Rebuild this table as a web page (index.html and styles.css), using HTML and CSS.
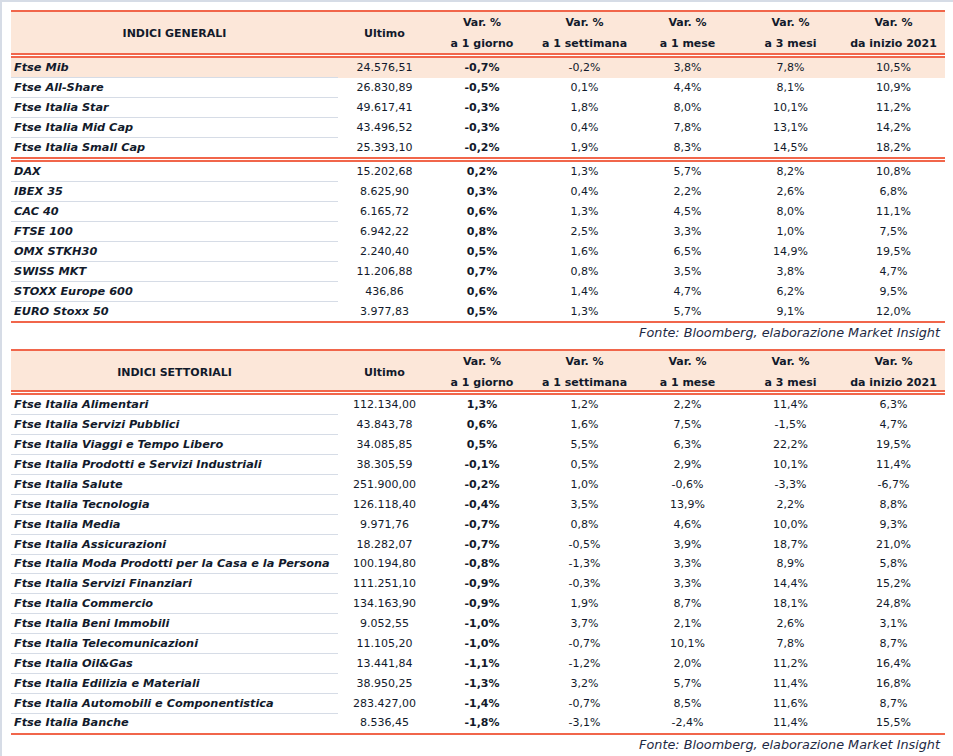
FILE: index.html
```html
<!DOCTYPE html>
<html lang="it">
<head>
<meta charset="utf-8">
<title>Indici</title>
<link rel="stylesheet" href="styles.css">
</head>
<body>
<div class="sheet">
  <div class="tbl">
    <div class="hdr hdr-a">
      <div class="hc">INDICI GENERALI</div>
      <div class="hc">Ultimo</div>
      <div class="hc">Var. %<br>a 1 giorno</div>
      <div class="hc">Var. %<br>a 1 settimana</div>
      <div class="hc">Var. %<br>a 1 mese</div>
      <div class="hc">Var. %<br>a 3 mesi</div>
      <div class="hc">Var. %<br>da inizio 2021</div>
    </div>
    <div class="dbl"></div>
    <div class="row hl"><div class="lb">Ftse Mib</div><div>24.576,51</div><div class="b">-0,7%</div><div>-0,2%</div><div>3,8%</div><div>7,8%</div><div>10,5%</div></div>
    <div class="row"><div class="lb">Ftse All-Share</div><div>26.830,89</div><div class="b">-0,5%</div><div>0,1%</div><div>4,4%</div><div>8,1%</div><div>10,9%</div></div>
    <div class="row"><div class="lb">Ftse Italia Star</div><div>49.617,41</div><div class="b">-0,3%</div><div>1,8%</div><div>8,0%</div><div>10,1%</div><div>11,2%</div></div>
    <div class="row"><div class="lb">Ftse Italia Mid Cap</div><div>43.496,52</div><div class="b">-0,3%</div><div>0,4%</div><div>7,8%</div><div>13,1%</div><div>14,2%</div></div>
    <div class="row last"><div class="lb">Ftse Italia Small Cap</div><div>25.393,10</div><div class="b">-0,2%</div><div>1,9%</div><div>8,3%</div><div>14,5%</div><div>18,2%</div></div>
    <div class="dbl"></div>
    <div class="row"><div class="lb">DAX</div><div>15.202,68</div><div class="b">0,2%</div><div>1,3%</div><div>5,7%</div><div>8,2%</div><div>10,8%</div></div>
    <div class="row"><div class="lb">IBEX 35</div><div>8.625,90</div><div class="b">0,3%</div><div>0,4%</div><div>2,2%</div><div>2,6%</div><div>6,8%</div></div>
    <div class="row"><div class="lb">CAC 40</div><div>6.165,72</div><div class="b">0,6%</div><div>1,3%</div><div>4,5%</div><div>8,0%</div><div>11,1%</div></div>
    <div class="row"><div class="lb">FTSE 100</div><div>6.942,22</div><div class="b">0,8%</div><div>2,5%</div><div>3,3%</div><div>1,0%</div><div>7,5%</div></div>
    <div class="row"><div class="lb">OMX STKH30</div><div>2.240,40</div><div class="b">0,5%</div><div>1,6%</div><div>6,5%</div><div>14,9%</div><div>19,5%</div></div>
    <div class="row"><div class="lb">SWISS MKT</div><div>11.206,88</div><div class="b">0,7%</div><div>0,8%</div><div>3,5%</div><div>3,8%</div><div>4,7%</div></div>
    <div class="row"><div class="lb">STOXX Europe 600</div><div>436,86</div><div class="b">0,6%</div><div>1,4%</div><div>4,7%</div><div>6,2%</div><div>9,5%</div></div>
    <div class="row last"><div class="lb">EURO Stoxx 50</div><div>3.977,83</div><div class="b">0,5%</div><div>1,3%</div><div>5,7%</div><div>9,1%</div><div>12,0%</div></div>
    <div class="end"></div>
    <div class="src">Fonte: Bloomberg, elaborazione Market Insight</div>
  </div>

  <div class="tbl">
    <div class="hdr hdr-b">
      <div class="hc">INDICI SETTORIALI</div>
      <div class="hc">Ultimo</div>
      <div class="hc">Var. %<br>a 1 giorno</div>
      <div class="hc">Var. %<br>a 1 settimana</div>
      <div class="hc">Var. %<br>a 1 mese</div>
      <div class="hc">Var. %<br>a 3 mesi</div>
      <div class="hc">Var. %<br>da inizio 2021</div>
    </div>
    <div class="dbl"></div>
    <div class="row"><div class="lb">Ftse Italia Alimentari</div><div>112.134,00</div><div class="b">1,3%</div><div>1,2%</div><div>2,2%</div><div>11,4%</div><div>6,3%</div></div>
    <div class="row"><div class="lb">Ftse Italia Servizi Pubblici</div><div>43.843,78</div><div class="b">0,6%</div><div>1,6%</div><div>7,5%</div><div>-1,5%</div><div>4,7%</div></div>
    <div class="row"><div class="lb">Ftse Italia Viaggi e Tempo Libero</div><div>34.085,85</div><div class="b">0,5%</div><div>5,5%</div><div>6,3%</div><div>22,2%</div><div>19,5%</div></div>
    <div class="row"><div class="lb">Ftse Italia Prodotti e Servizi Industriali</div><div>38.305,59</div><div class="b">-0,1%</div><div>0,5%</div><div>2,9%</div><div>10,1%</div><div>11,4%</div></div>
    <div class="row"><div class="lb">Ftse Italia Salute</div><div>251.900,00</div><div class="b">-0,2%</div><div>1,0%</div><div>-0,6%</div><div>-3,3%</div><div>-6,7%</div></div>
    <div class="row"><div class="lb">Ftse Italia Tecnologia</div><div>126.118,40</div><div class="b">-0,4%</div><div>3,5%</div><div>13,9%</div><div>2,2%</div><div>8,8%</div></div>
    <div class="row"><div class="lb">Ftse Italia Media</div><div>9.971,76</div><div class="b">-0,7%</div><div>0,8%</div><div>4,6%</div><div>10,0%</div><div>9,3%</div></div>
    <div class="row"><div class="lb">Ftse Italia Assicurazioni</div><div>18.282,07</div><div class="b">-0,7%</div><div>-0,5%</div><div>3,9%</div><div>18,7%</div><div>21,0%</div></div>
    <div class="row"><div class="lb">Ftse Italia Moda Prodotti per la Casa e la Persona</div><div>100.194,80</div><div class="b">-0,8%</div><div>-1,3%</div><div>3,3%</div><div>8,9%</div><div>5,8%</div></div>
    <div class="row"><div class="lb">Ftse Italia Servizi Finanziari</div><div>111.251,10</div><div class="b">-0,9%</div><div>-0,3%</div><div>3,3%</div><div>14,4%</div><div>15,2%</div></div>
    <div class="row"><div class="lb">Ftse Italia Commercio</div><div>134.163,90</div><div class="b">-0,9%</div><div>1,9%</div><div>8,7%</div><div>18,1%</div><div>24,8%</div></div>
    <div class="row"><div class="lb">Ftse Italia Beni Immobili</div><div>9.052,55</div><div class="b">-1,0%</div><div>3,7%</div><div>2,1%</div><div>2,6%</div><div>3,1%</div></div>
    <div class="row"><div class="lb">Ftse Italia Telecomunicazioni</div><div>11.105,20</div><div class="b">-1,0%</div><div>-0,7%</div><div>10,1%</div><div>7,8%</div><div>8,7%</div></div>
    <div class="row"><div class="lb">Ftse Italia Oil&amp;Gas</div><div>13.441,84</div><div class="b">-1,1%</div><div>-1,2%</div><div>2,0%</div><div>11,2%</div><div>16,4%</div></div>
    <div class="row"><div class="lb">Ftse Italia Edilizia e Materiali</div><div>38.950,25</div><div class="b">-1,3%</div><div>3,2%</div><div>5,7%</div><div>11,4%</div><div>16,8%</div></div>
    <div class="row"><div class="lb">Ftse Italia Automobili e Componentistica</div><div>283.427,00</div><div class="b">-1,4%</div><div>-0,7%</div><div>8,5%</div><div>11,6%</div><div>8,7%</div></div>
    <div class="row last"><div class="lb">Ftse Italia Banche</div><div>8.536,45</div><div class="b">-1,8%</div><div>-3,1%</div><div>-2,4%</div><div>11,4%</div><div>15,5%</div></div>
    <div class="end"></div>
    <div class="src">Fonte: Bloomberg, elaborazione Market Insight</div>
  </div>
</div>
</body>
</html>
```
FILE: styles.css
```css
html, body {
  margin: 0;
  padding: 0;
  background: #ffffff;
}
body {
  border-top: 2px solid #d6dce6;
  border-left: 2px solid #d6dce6;
  min-height: 754px;
  box-sizing: border-box;
  font-family: "DejaVu Sans", "Liberation Sans", sans-serif;
  font-size: 11px;
  color: #121a2b;
}
.sheet {
  padding: 8px 0 0 9px;
  width: 934px;
}
.tbl {
  display: flex;
  flex-direction: column;
}
.hdr, .row {
  display: grid;
  grid-template-columns: 327px 93px 102px 103px 103px 103px 103px;
}
.hdr {
  background: #fce7d9;
  border-top: 2px solid #f1664b;
  font-weight: bold;
  line-height: 21px;
}
.hdr-a { height: 41px; }
.hdr-b { height: 39px; }
.hc {
  display: flex;
  flex-direction: column;
  justify-content: center;
  align-items: center;
  text-align: center;
}
.dbl {
  height: 5px;
  box-sizing: border-box;
  border-top: 2px solid #f1664b;
  border-bottom: 2px solid #f1664b;
}
.row {
  height: 19.875px;
  line-height: 19px;
  text-align: center;
}
.row > div {
  white-space: nowrap;
}
.row.hl {
  background: #fce7d9;
}
.row .lb {
  text-align: left;
  padding-left: 3px;
  font-weight: bold;
  font-style: italic;
  font-size: 11.3px;
  border-bottom: 1px solid #d6dce6;
  box-sizing: border-box;
}
.row.last .lb {
  border-bottom: none;
}
.row .b {
  font-weight: bold;
}
.end {
  height: 2px;
  background: #f1664b;
}
.src {
  height: 26px;
  line-height: 20px;
  text-align: right;
  padding-right: 5px;
  font-style: italic;
  font-size: 12.8px;
  color: #1e2a44;
}
```
